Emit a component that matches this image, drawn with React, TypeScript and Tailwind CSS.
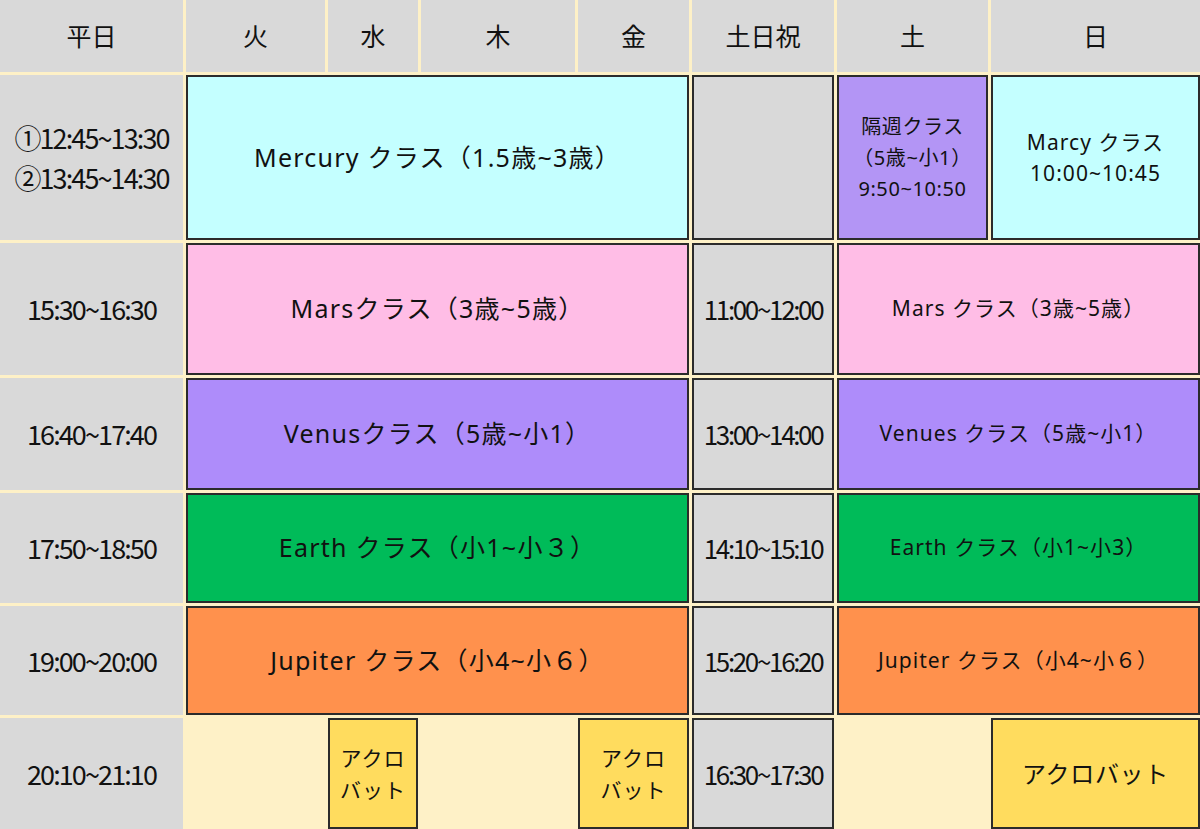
const font = { fontFamily: '"Noto Sans", "Noto Sans CJK JP", sans-serif' };
const cjk = { fontFamily: '"Noto Sans CJK JP", "Noto Sans", sans-serif' };

function Head({ children }: { children: React.ReactNode }) {
  return (
    <div style={cjk} className="bg-[#d9d9d9] flex items-center justify-center text-[25px] text-[#111]">
      {children}
    </div>
  );
}

function Time({ children, boxed }: { children: React.ReactNode; boxed?: boolean }) {
  return (
    <div
      style={cjk}
      className={
        "bg-[#d9d9d9] flex flex-col items-center justify-center leading-[40px] text-[#111] " +
        (boxed
          ? "border-2 border-[#2b2b2b] text-[26px] tracking-[-0.09em]"
          : "text-[27px] tracking-[-0.07em]")
      }
    >
      {children}
    </div>
  );
}

function Cls({
  children,
  className,
}: {
  children: React.ReactNode;
  className: string;
}) {
  return (
    <div
      className={
        "border-2 border-[#2b2b2b] flex flex-col items-center justify-center text-center text-[#111] " +
        className
      }
    >
      {children}
    </div>
  );
}

export default function App() {
  return (
    <div
      style={font}
      className="w-[1200px] h-[829px] bg-[#fef1c7] grid grid-cols-[183px_139px_90px_154px_111px_142px_151px_209px] grid-rows-[72px_165px_132px_112px_110px_109px_111px] gap-[3px]"
    >
      {/* header */}
      <Head>平日</Head>
      <Head>火</Head>
      <Head>水</Head>
      <Head>木</Head>
      <Head>金</Head>
      <Head>土日祝</Head>
      <Head>土</Head>
      <Head>日</Head>

      {/* row 1 */}
      <Time>
        <span>①12:45~13:30</span>
        <span>②13:45~14:30</span>
      </Time>
      <Cls className="col-span-4 bg-[#c4ffff] text-[25px] tracking-[0.05em]">Mercury クラス（1.5歳~3歳）</Cls>
      <Cls className="bg-[#d9d9d9]">{""}</Cls>
      <Cls className="bg-[#b395f5] text-[20px] leading-[31px] tracking-[0.03em]">
        <span>隔週クラス</span>
        <span>（5歳~小1）</span>
        <span>9:50~10:50</span>
      </Cls>
      <Cls className="bg-[#c4ffff] text-[21px] leading-[31px] tracking-[0.05em]">
        <span>Marcy クラス</span>
        <span>10:00~10:45</span>
      </Cls>

      {/* row 2 */}
      <Time>15:30~16:30</Time>
      <Cls className="col-span-4 bg-[#ffbde6] text-[25px] tracking-[0.05em]">Marsクラス（3歳~5歳）</Cls>
      <Time boxed>11:00~12:00</Time>
      <Cls className="col-span-2 bg-[#ffbde6] text-[21px] tracking-[0.05em]">Mars クラス（3歳~5歳）</Cls>

      {/* row 3 */}
      <Time>16:40~17:40</Time>
      <Cls className="col-span-4 bg-[#ae8cfa] text-[25px] tracking-[0.05em]">Venusクラス（5歳~小1）</Cls>
      <Time boxed>13:00~14:00</Time>
      <Cls className="col-span-2 bg-[#ae8cfa] text-[21px] tracking-[0.05em]">Venues クラス（5歳~小1）</Cls>

      {/* row 4 */}
      <Time>17:50~18:50</Time>
      <Cls className="col-span-4 bg-[#00bb59] text-[25px] tracking-[0.05em]">Earth クラス（小1~小３）</Cls>
      <Time boxed>14:10~15:10</Time>
      <Cls className="col-span-2 bg-[#00bb59] text-[21px] tracking-[0.05em]">Earth クラス（小1~小3）</Cls>

      {/* row 5 */}
      <Time>19:00~20:00</Time>
      <Cls className="col-span-4 bg-[#ff914d] text-[25px] tracking-[0.05em]">Jupiter クラス（小4~小６）</Cls>
      <Time boxed>15:20~16:20</Time>
      <Cls className="col-span-2 bg-[#ff914d] text-[21px] tracking-[0.05em]">Jupiter クラス（小4~小６）</Cls>

      {/* row 6 */}
      <Time>20:10~21:10</Time>
      <div />
      <Cls className="bg-[#ffdc5e] text-[21px] leading-[32px] tracking-[0.05em]">
        <span>アクロ</span>
        <span>バット</span>
      </Cls>
      <div />
      <Cls className="bg-[#ffdc5e] text-[21px] leading-[32px] tracking-[0.05em]">
        <span>アクロ</span>
        <span>バット</span>
      </Cls>
      <Time boxed>16:30~17:30</Time>
      <div />
      <Cls className="bg-[#ffdc5e] text-[24px] tracking-[0.03em]">アクロバット</Cls>
    </div>
  );
}
